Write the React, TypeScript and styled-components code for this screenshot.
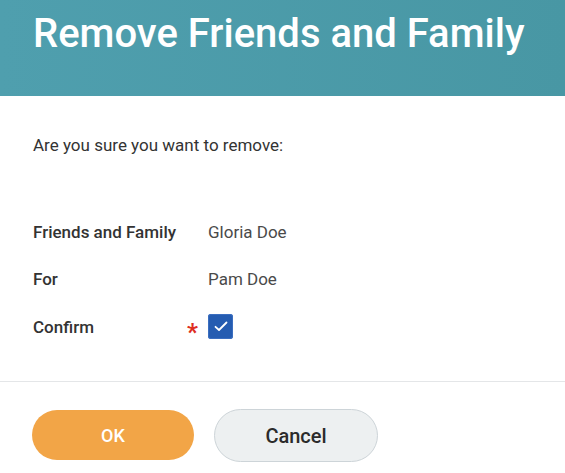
import React from "react";
import styled, { createGlobalStyle } from "styled-components";

const Global = createGlobalStyle`
  html, body { margin: 0; padding: 0; background: #ffffff; }
  body { font-family: Roboto, "Noto Sans", sans-serif; color: #333333; }
`;

const Page = styled.div`
  width: 565px;
  height: 473px;
  display: flex;
  flex-direction: column;
  background: #ffffff;
  overflow: hidden;
`;

const Header = styled.header`
  height: 96px;
  box-sizing: border-box;
  padding: 11px 0 0 33px;
  background: linear-gradient(90deg, #4f9fae 0%, #4897a4 100%);
`;

const Title = styled.h1`
  margin: 0;
  font-family: Roboto, sans-serif;
  font-weight: 500;
  font-size: 40px;
  line-height: 46px;
  color: #ffffff;
  letter-spacing: 0;
`;

const Body = styled.main`
  padding: 37px 33px 0 33px;
  height: 285px;
  box-sizing: border-box;
`;

const Intro = styled.p`
  margin: 0 0 62px 0;
  font-size: 17px;
  line-height: 24px;
  color: #333333;
`;

const Rows = styled.div`
  display: flex;
  flex-direction: column;
  gap: 22.5px;
`;

const Row = styled.div`
  display: grid;
  grid-template-columns: 175px 1fr;
  align-items: center;
  min-height: 25px;
`;

const Label = styled.div`
  display: flex;
  justify-content: space-between;
  align-items: center;
  font-size: 17px;
  font-weight: 500;
  color: #333333;
  padding-right: 10px;
`;

const Value = styled.div`
  font-size: 17px;
  color: #4a4a4a;
`;

const Required = styled.span`
  color: #de2e21;
  font-size: 24px;
  font-weight: 700;
  line-height: 1;
  position: relative;
  top: 5px;
`;

const Checkbox = styled.div`
  width: 25px;
  height: 25px;
  border-radius: 3px;
  background: #255cb1;
  display: flex;
  align-items: center;
  justify-content: center;
  box-shadow: 0 0 0 1px #3b6ec0 inset;
`;

const Footer = styled.footer`
  border-top: 1px solid #e4e6e8;
  display: flex;
  gap: 20px;
  padding: 27px 32px 0 32px;
`;

const Button = styled.button<{ $primary?: boolean }>`
  width: ${(p) => (p.$primary ? "162px" : "164px")};
  height: ${(p) => (p.$primary ? "50px" : "53px")};
  margin-top: ${(p) => (p.$primary ? "1px" : "0")};
  border-radius: 27px;
  border: ${(p) => (p.$primary ? "none" : "1.5px solid #cdd4d8")};
  background: ${(p) => (p.$primary ? "#f2a547" : "#edf0f1")};
  color: ${(p) => (p.$primary ? "#ffffff" : "#2b2b2b")};
  font-family: Roboto, sans-serif;
  font-size: ${(p) => (p.$primary ? "18px" : "20px")};
  font-weight: 500;
  cursor: pointer;
  padding: 0;
`;

export default function App() {
  return (
    <>
      <Global />
      <Page>
        <Header>
          <Title>Remove Friends and Family</Title>
        </Header>
        <Body>
          <Intro>Are you sure you want to remove:</Intro>
          <Rows>
            <Row>
              <Label>Friends and Family</Label>
              <Value>Gloria Doe</Value>
            </Row>
            <Row>
              <Label>For</Label>
              <Value>Pam Doe</Value>
            </Row>
            <Row>
              <Label>
                Confirm
                <Required>*</Required>
              </Label>
              <Checkbox>
                <svg width="14" height="11" viewBox="0 0 14 11" fill="none">
                  <path d="M1.5 5.8 L5 9 L12.5 1.5" stroke="#ffffff" strokeWidth="1.8" strokeLinecap="round" strokeLinejoin="round" />
                </svg>
              </Checkbox>
            </Row>
          </Rows>
        </Body>
        <Footer>
          <Button $primary>OK</Button>
          <Button>Cancel</Button>
        </Footer>
      </Page>
    </>
  );
}
